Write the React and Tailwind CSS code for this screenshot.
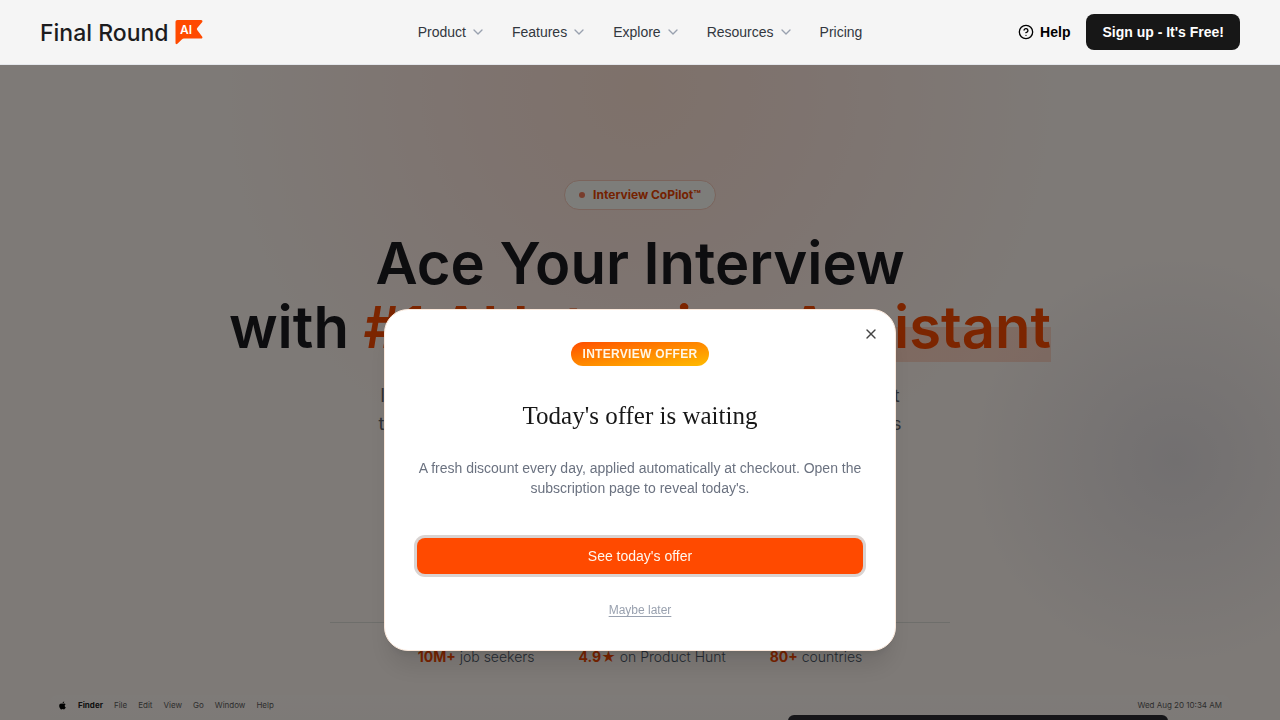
import React, { useState } from 'react';
import { ChevronDown, CircleHelp, X } from 'lucide-react';
import { FaApple } from 'react-icons/fa';

const navItems = [
    { label: 'Product', hasMenu: true },
    { label: 'Features', hasMenu: true },
    { label: 'Explore', hasMenu: true },
    { label: 'Resources', hasMenu: true },
    { label: 'Pricing', hasMenu: false },
];

const stats = [
    { value: '10M+', label: 'job seekers' },
    { value: '4.9★', label: 'on Product Hunt' },
    { value: '80+', label: 'countries' },
];

const menuBarItems = ['File', 'Edit', 'View', 'Go', 'Window', 'Help'];

function Logo() {
    return (
        <a href="#" className="flex items-center gap-1.5 font-['Inter',sans-serif] text-[#1c1c1e]">
            <span className="pt-0.5 text-[23px] leading-8 font-medium">Final Round</span>
            <svg width="28" height="26" viewBox="0 0 28 26" aria-label="AI">
                <path
                    d="M2.500 1H26c1.400 0 2 1.300 1.100 2.300L22.200 9.100a1.500 1.500 0 0 0 0 1.900L27.100 17.400c.8 1 .2 2.200-1.100 2.200H9c-.9 0-1.600.3-2.200.9L2.400 24.800C1.600 25.500.5 25.100.5 24V3c0-1.200.8-2 2-2Z"
                    fill="#ff4a00"
                />
                <text x="5" y="15" fill="#fff" fontSize="12" fontWeight="600" fontFamily="Inter, sans-serif">AI</text>
            </svg>
        </a>
    );
}

function Header() {
    return (
        <header className="relative z-50 grid grid-cols-[1fr_auto_1fr] items-center h-[65px] px-10 bg-[#f5f5f5] border-b border-gray-200">
            <Logo />
            <nav className="flex items-center gap-[26px] text-sm text-[#32373e]">
                {navItems.map(({ label, hasMenu }) =>
                    hasMenu ? (
                        <button key={label} className="flex items-center gap-1">
                            {label}
                            <ChevronDown size={16} className="text-gray-400" />
                        </button>
                    ) : (
                        <a key={label} href="#">{label}</a>
                    )
                )}
            </nav>
            <div className="flex items-center justify-end gap-4 text-sm font-bold">
                <a href="#" className="flex items-center gap-1.5 text-black">
                    <CircleHelp size={16} />
                    Help
                </a>
                <button className="h-9 px-4 rounded-lg bg-[#171717] text-white">Sign up - It's Free!</button>
            </div>
        </header>
    );
}

function Hero() {
    return (
        <section className="flex flex-col items-center pt-[115px] text-center font-['Inter',sans-serif]">
            <div className="flex items-center gap-2 h-[30px] px-3.5 rounded-full bg-[#fbfaf5] border border-[#f5c9b8] text-xs font-bold text-[#e84400]">
                <span className="size-1.5 rounded-full bg-[#f07a58]" />
                Interview CoPilot™
            </div>

            <h1 className="mt-[21px] text-[58px] leading-16 font-semibold text-[#1b1b1f]">
                Ace Your Interview
                <br />
                with{' '}
                <span className="text-[#f84a00]">
                    #1 AI Interview{' '}
                    <mark className="bg-transparent text-inherit bg-linear-to-b from-transparent from-50% to-[#ff5a1f]/20 to-50%">
                        Assistant
                    </mark>
                </span>
            </h1>

            <p className="mt-[23px] text-lg leading-7 text-[#5f646b]">
                Instant answers for all your live tech interview questions, that
                <br />
                turn your own real experience into clear and confident replies
            </p>

            <div className="w-full max-w-[620px] h-px mt-[184px] bg-[#dcdcd6]" />

            <ul className="flex gap-11 mt-6 text-sm leading-5 font-light text-gray-600">
                {stats.map(({ value, label }) => (
                    <li key={label}>
                        <strong className="font-bold text-[#f04800]">{value}</strong> {label}
                    </li>
                ))}
            </ul>
        </section>
    );
}

function DesktopPreview() {
    return (
        <section className="w-full max-w-[1180px] mx-auto mt-7 rounded-t-lg bg-linear-to-b from-white/10 to-gray-400/30 font-['Inter',sans-serif] text-[8px]">
            <div className="flex items-center gap-[11px] h-5 px-2 text-[#5c5c5c]">
                <FaApple size={9} className="text-black" />
                <span className="font-bold text-[#222]">Finder</span>
                {menuBarItems.map((item) => (
                    <span key={item}>{item}</span>
                ))}
                <span className="ml-auto">Wed Aug 20 10:34 AM</span>
            </div>
            <div className="h-80 w-[380px] ml-auto mr-[62px] rounded-t-md bg-[#2d2d33]" />
        </section>
    );
}

function OfferDialog({ onClose }) {
    return (
        <div className="fixed inset-0 z-40 flex items-end justify-center pb-[69px] bg-black/50">
            <div
                role="dialog"
                aria-modal="true"
                aria-labelledby="offer-title"
                className="relative flex flex-col items-center w-full max-w-lg p-8 rounded-3xl bg-white border border-[#fbe9dc] text-center shadow-xl"
            >
                <button
                    onClick={onClose}
                    aria-label="Close"
                    className="absolute top-4 right-4 text-[#444]"
                >
                    <X size={16} strokeWidth={2} />
                </button>

                <span className="px-3 py-1 rounded-full bg-linear-to-br from-[#ff4a00] to-[#ffbb00] text-xs font-bold tracking-wide text-[#fff7e6]">
                    INTERVIEW OFFER
                </span>
                <h2 id="offer-title" className="mt-[30px] font-['Liberation_Serif',serif] text-[25px] leading-10 text-[#171717]">
                    Today's offer is waiting
                </h2>
                <p className="mt-[22px] text-sm text-[#6b7280]">
                    A fresh discount every day, applied automatically at checkout. Open the subscription page to reveal today's.
                </p>
                <button className="w-full h-9 mt-10 rounded-lg bg-[#ff4a00] ring-3 ring-[#d9d3d1] text-sm text-[#fff7ed]">
                    See today's offer
                </button>
                <button onClick={onClose} className="mt-7 text-xs text-gray-400 underline underline-offset-2">
                    Maybe later
                </button>
            </div>
        </div>
    );
}

export default function App() {
    const [showOffer, setShowOffer] = useState(true);

    return (
        <div className="h-screen overflow-hidden bg-[#fdf5ef] font-['Liberation_Sans',sans-serif]">
            <Header />
            {/* Soft orange and slate glows behind the hero */}
            <main className="bg-[radial-gradient(circle_at_50%_25px,rgba(255,120,60,0.15),rgba(255,110,80,0.11)_150px,transparent_430px),radial-gradient(circle_at_1175px_395px,rgba(100,110,150,0.16),transparent_210px)]">
                <Hero />
                <DesktopPreview />
            </main>
            {showOffer && <OfferDialog onClose={() => setShowOffer(false)} />}
        </div>
    );
}
